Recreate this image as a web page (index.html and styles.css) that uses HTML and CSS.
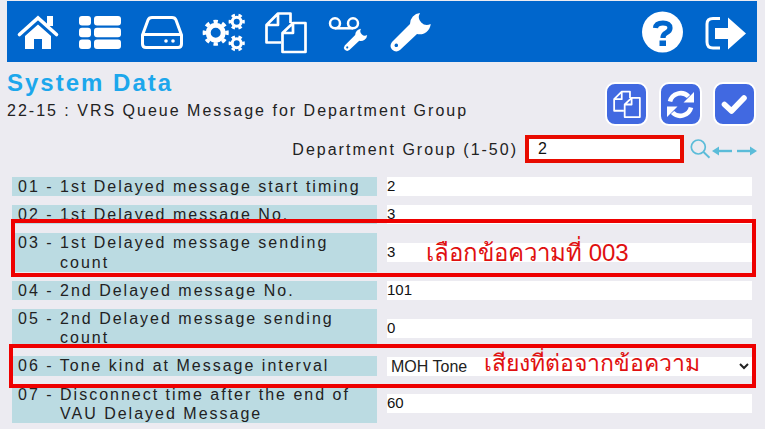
FILE: index.html
```html
<!DOCTYPE html>
<html lang="en">
<head>
    <meta charset="UTF-8">
    <meta name="viewport" content="width=device-width, initial-scale=1.0">
    <title>System Data</title>
    <link rel="stylesheet" href="styles.css">
</head>
<body>

    <header class="topbar">
        <!-- home -->
        <svg class="nav-icon" viewBox="0 0 42 42">
            <path d="M30 5h6v10h-6z" fill="#fff"/>
            <path d="M2.500 23.500 21 7l18.500 16.500" fill="none" stroke="#fff" stroke-width="3.600" stroke-linecap="round"/>
            <path d="M8 25 21 13.500 34 25v13h-9v-10h-8v10H8z" fill="#fff"/>
        </svg>
        <!-- list -->
        <svg class="nav-icon" viewBox="0 0 42 42" fill="#fff">
            <rect x="0" y="5" width="12" height="9.500" rx="3"/>
            <rect x="15" y="5" width="27" height="9.500" rx="3"/>
            <rect x="0" y="16.800" width="12" height="9.500" rx="3"/>
            <rect x="15" y="16.800" width="27" height="9.500" rx="3"/>
            <rect x="0" y="28.600" width="12" height="9.500" rx="3"/>
            <rect x="15" y="28.600" width="27" height="9.500" rx="3"/>
        </svg>
        <!-- disk -->
        <svg class="nav-icon" viewBox="0 0 42 42">
            <path d="M11 6.500h20q3 0 4 2.500l5.500 15v9q0 3.500-3.500 3.500H5q-3.500 0-3.500-3.500v-9L7 9q1-2.500 4-2.500zM2 23.500h38" fill="none" stroke="#fff" stroke-width="3"/>
            <circle cx="25" cy="30" r="1.800" fill="#fff"/>
            <circle cx="32" cy="30" r="1.800" fill="#fff"/>
        </svg>
        <!-- cogs -->
        <svg class="nav-icon" viewBox="0 0 42 42" fill="none" stroke="#fff">
            <circle cx="12.700" cy="21.700" r="7.500" stroke-width="5"/>
            <circle cx="12.700" cy="21.700" r="11.300" stroke-width="3.500" pathLength="16" stroke-dasharray="1 1" stroke-dashoffset="0.500"/>
            <circle cx="33.700" cy="10.700" r="4.500" stroke-width="3"/>
            <circle cx="33.700" cy="10.700" r="6.800" stroke-width="2.600" pathLength="12" stroke-dasharray="1 1" stroke-dashoffset="0.500"/>
            <circle cx="33.700" cy="32.300" r="4.500" stroke-width="3"/>
            <circle cx="33.700" cy="32.300" r="6.800" stroke-width="2.600" pathLength="12" stroke-dasharray="1 1" stroke-dashoffset="0.500"/>
        </svg>
        <!-- files -->
        <svg class="nav-icon" viewBox="0 0 42 42">
            <path d="M25.500 12V2.500H13L1.500 14v17.500H16M13 3v11H2M28 12h12.500v29h-23V22zM28 12v10H17.500" fill="none" stroke="#fff" stroke-width="2.700" stroke-linejoin="round"/>
        </svg>
        <!-- voicemail setup -->
        <svg class="nav-icon" viewBox="0 0 42 42">
            <path d="M8 17.300h18" fill="none" stroke="#fff" stroke-width="2.500"/>
            <circle cx="8" cy="12.300" r="5" fill="none" stroke="#fff" stroke-width="2.500"/>
            <circle cx="26" cy="12.300" r="5" fill="none" stroke="#fff" stroke-width="2.500"/>
            <path transform="translate(16 16.500) scale(.58)" fill="#fff" fill-rule="evenodd" d="M31 2A11 11 0 0 0 21 13L3 31Q0 35 3 38.500 7 42 11 39L28 23A11 11 0 0 0 41.700 13 8 8 0 0 1 31 2zM7.300 32.500a1.800 1.800 0 1 0 .01 0z"/>
        </svg>
        <!-- wrench -->
        <svg class="nav-icon" viewBox="0 0 42 42">
            <path fill="#fff" fill-rule="evenodd" d="M31 2A11 11 0 0 0 21 13L3 31Q0 35 3 38.500 7 42 11 39L28 23A11 11 0 0 0 41.700 13 8 8 0 0 1 31 2zM7.300 32.500a1.800 1.800 0 1 0 .01 0z"/>
        </svg>
        <div class="topbar-right">
            <!-- help -->
            <svg class="nav-icon" viewBox="0 0 42 42">
                <circle cx="20.500" cy="21" r="20.500" fill="#fff"/>
                <path d="M13.500 17q.5-5 7.500-5 7 0 7 5 0 3-4 5-3 1.500-3 5" fill="none" stroke="#0066cc" stroke-width="5.200"/>
                <path d="M17.500 29.500h6.500V35h-6.500z" fill="#0066cc"/>
            </svg>
            <!-- logout -->
            <svg class="nav-icon" viewBox="0 0 42 42">
                <path d="M15 7.500H8q-6 0-6 5.500v18q0 6 6 6h7" fill="none" stroke="#fff" stroke-width="3"/>
                <path d="M10 17h13V6.500L41 22.500 23 38.500V28H10z" fill="#fff"/>
            </svg>
        </div>
    </header>

    <section class="page-head">
        <div>
            <h1>System Data</h1>
            <p class="subtitle">22-15 : VRS Queue Message for Department Group</p>
        </div>
        <div class="actions">
            <button class="action-btn">
                <svg width="28" height="29" viewBox="0 0 42 44">
                    <path d="M25.500 12V2.500H13L1.500 14v17.500H16M13 3v11H2M28 12h12.500v29h-23V22zM28 12v10H17.500" fill="none" stroke="#fff" stroke-width="2.700" stroke-linejoin="round"/>
                </svg>
            </button>
            <button class="action-btn">
                <svg width="43" height="44" viewBox="0 0 43 44">
                    <path d="M11 19.500A11 11 0 0 1 29.500 14.500M32 25.500A11 11 0 0 1 13.500 30.500" fill="none" stroke="#fff" stroke-width="4.600"/>
                    <path d="M35 10v10.500H24.500zM8 35V24.500h10.500z" fill="#fff"/>
                </svg>
            </button>
            <button class="action-btn">
                <svg width="43" height="44" viewBox="0 0 43 44">
                    <path d="M11.500 22.500l7 6.500L31 16" fill="none" stroke="#fff" stroke-width="5.600" stroke-linecap="round" stroke-linejoin="round"/>
                </svg>
            </button>
        </div>
    </section>

    <div class="group-row">
        <label for="group">Department Group (1-50)</label>
        <input id="group" class="group-input" type="text" value="2">
        <div class="group-tools">
            <svg class="search-icon" width="21" height="22" viewBox="0 0 21 22">
                <circle cx="8.300" cy="8" r="7" fill="none" stroke="#5bbcd9" stroke-width="1.700"/>
                <path d="M13.500 13l6 5.800" fill="none" stroke="#5bbcd9" stroke-width="1.900"/>
            </svg>
            <svg width="20" height="10" viewBox="0 0 20 10">
                <path d="M20 5H4" stroke="#5bbcd9" stroke-width="2.400"/>
                <path d="M0 5l7-4.500v9z" fill="#5bbcd9"/>
            </svg>
            <svg width="20" height="10" viewBox="0 0 20 10">
                <path d="M0 5h16" stroke="#5bbcd9" stroke-width="2.400"/>
                <path d="M20 5l-7-4.500v9z" fill="#5bbcd9"/>
            </svg>
        </div>
    </div>

    <div class="fields">
        <div class="field-label">01 - 1st Delayed message start timing</div>
        <input class="field-value" type="text" value="2">
        <div class="field-label">02 - 1st Delayed message No.</div>
        <input class="field-value" type="text" value="3">
        <div class="field-label">03 - 1st Delayed message sending count</div>
        <input class="field-value" type="text" value="3">
        <div class="field-label">04 - 2nd Delayed message No.</div>
        <input class="field-value" type="text" value="101">
        <div class="field-label">05 - 2nd Delayed message sending count</div>
        <input class="field-value" type="text" value="0">
        <div class="field-label">06 - Tone kind at Message interval</div>
        <select class="field-value field-select">
            <option>MOH Tone</option>
        </select>
        <div class="field-label">07 - Disconnect time after the end of VAU Delayed Message</div>
        <input class="field-value" type="text" value="60">
    </div>

    <!-- annotations drawn over the form -->
    <div class="mark mark-count"></div>
    <div class="mark mark-tone"></div>
    <span class="note note-count">เลือกข้อความที่ 003</span>
    <span class="note note-tone">เสียงที่ต่อจากข้อความ</span>

</body>
</html>
```

FILE: styles.css
```css
html, body { height: 100%; }
body { font-family: "Liberation Sans", Arial, sans-serif; margin: 0; padding: 1px 8px 0 7px; background: #ecebf1; color: #222; position: relative; overflow: hidden; box-sizing: border-box; }

.topbar { display: flex; align-items: center; gap: 20px; height: 61px; padding: 0 10px; background: #0066cc; box-sizing: border-box; }
.nav-icon { width: 42px; height: 42px; display: block; flex: none; overflow: visible; }
.topbar-right { display: flex; gap: 21px; margin-left: auto; }

.page-head { display: flex; justify-content: space-between; height: 72px; }
h1 { margin: 7px 0 0; font-size: 24px; line-height: 28px; font-weight: bold; letter-spacing: 2px; color: #1ca7ec; }
.subtitle { margin: 5px 0 0; font-size: 16px; line-height: 18px; letter-spacing: 2px; }
.actions { display: flex; gap: 11px; margin: 20px 1px 0 0; }
.action-btn { width: 43px; height: 44px; padding: 0; border: 2px solid #fff; border-radius: 10px; background: #4169e1; display: flex; align-items: center; justify-content: center; }
.action-btn svg { flex: none; }

.group-row { display: flex; align-items: center; justify-content: flex-end; height: 28px; margin-top: 1px; }
.group-row label { font-size: 16px; letter-spacing: 2px; margin: 2px 7px 0 0; }
.group-input { width: 159px; height: 28px; box-sizing: border-box; border: 4px solid #e80b00; padding: 0 9px; background: #fff; font: 16px "Liberation Sans", Arial, sans-serif; color: #111; outline: none; }
.group-tools { display: flex; align-items: center; gap: 5px; margin-left: 6px; }
.group-tools svg { flex: none; }
.group-tools svg + svg { margin-top: 3px; }
.search-icon { margin-right: -4px; margin-top: 2px; }

.fields { display: grid; grid-template-columns: 365px 365px; gap: 9px 10px; align-items: center; margin: 14px 0 0 5px; }
.field-label { align-self: stretch; padding-left: 48px; text-indent: -42px; background: #bbdbe2; font-size: 16px; line-height: 19.2px; letter-spacing: 2px; }
.field-value { width: 365px; height: 19px; box-sizing: border-box; border: 0; padding: 0 0 2px; background: #fff; font: 15px "Liberation Sans", Arial, sans-serif; color: #111; outline: none; }
.field-select { padding: 0; font-size: 16px; color: #222; }

.mark { position: absolute; box-sizing: border-box; border: 4px solid #ee0000; }
.mark-count { left: 11px; top: 219px; width: 745px; height: 58px; }
.mark-tone { left: 9px; top: 344px; width: 747px; height: 44px; }
.note { position: absolute; color: #e01010; font-size: 24px; line-height: 30px; white-space: nowrap; }
.note-count { left: 426px; top: 238px; }
.note-tone { left: 484px; top: 348px; font-size: 23px; }
```
